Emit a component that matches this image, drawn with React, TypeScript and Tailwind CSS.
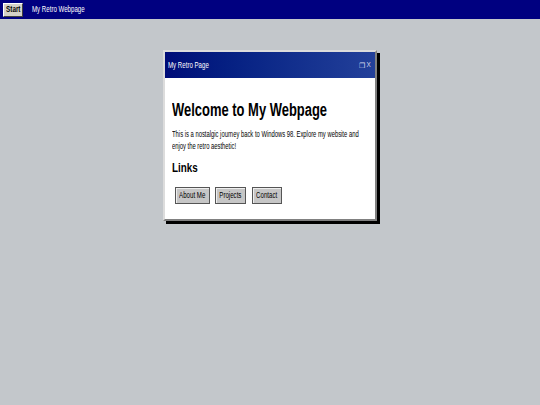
import React from "react";

const sans = { fontFamily: '"Liberation Sans", Arial, sans-serif' };

function Taskbar() {
  return (
    <div className="flex h-[19px] items-center bg-[#000080] pl-[3px]" style={sans}>
      <button className="flex h-[14px] w-[20px] items-center justify-center overflow-visible border border-t-white border-l-white border-b-[#404040] border-r-[#404040] bg-[#d4d0c8] text-[9px] font-bold leading-none text-black">
        <span className="inline-block origin-center scale-x-[0.7] whitespace-nowrap">Start</span>
      </button>
      <span className="ml-[9px] inline-block origin-left scale-x-[0.68] whitespace-nowrap text-[9px] leading-none text-white">
        My Retro Webpage
      </span>
    </div>
  );
}

function WinButton({ label, width }: { label: string; width: string }) {
  return (
    <button
      className={`flex h-[17px] items-center justify-center border border-[#555] bg-[#c6c6c6] text-[8.5px] leading-none text-black shadow-[inset_1px_1px_0_#eee] ${width}`}
    >
      <span className="inline-block origin-center scale-x-[0.72] whitespace-nowrap">{label}</span>
    </button>
  );
}

function RetroWindow() {
  return (
    <div
      className="w-[214px] border-2 border-t-[#dcdcdc] border-l-[#dcdcdc] border-b-[#808080] border-r-[#808080] bg-white shadow-[3px_3px_0_#000]"
      style={sans}
    >
      <div className="flex h-[26px] items-center justify-between bg-gradient-to-r from-[#000c78] to-[#23409a] pl-[3px] pr-[4px] text-white">
        <span className="inline-block origin-left scale-x-[0.72] whitespace-nowrap text-[8.5px] leading-none">
          My Retro Page
        </span>
        <span className="flex items-center gap-[1px] text-[8px] leading-none text-[#dde]">
          <span className="text-[7px]">❐</span>
          <span className="inline-block scale-x-[0.8]">X</span>
        </span>
      </div>
      <div className="px-[7px] pb-[15px] pt-[22px] text-black">
        <h1 className="origin-left scale-x-[0.72] whitespace-nowrap text-[18px] font-bold leading-[20px]">
          Welcome to My Webpage
        </h1>
        <div className="mt-[8px] w-full">
          <p className="w-[298px] origin-left scale-x-[0.65] text-[9px] leading-[12px]">
            This is a nostalgic journey back to Windows 98. Explore my website and enjoy the retro aesthetic!
          </p>
        </div>
        <h2 className="mt-[8px] origin-left scale-x-[0.76] whitespace-nowrap text-[13px] font-bold leading-[15px]">
          Links
        </h2>
        <div className="mt-[12px] flex pl-[3px]">
          <WinButton label="About Me" width="w-[35px]" />
          <div className="w-[5px]" />
          <WinButton label="Projects" width="w-[31px]" />
          <div className="w-[6px]" />
          <WinButton label="Contact" width="w-[30px]" />
        </div>
      </div>
    </div>
  );
}

export default function App() {
  return (
    <div className="min-h-[405px] w-full bg-[#c3c7cb]">
      <Taskbar />
      <div className="flex justify-center pt-[31px]">
        <RetroWindow />
      </div>
    </div>
  );
}
